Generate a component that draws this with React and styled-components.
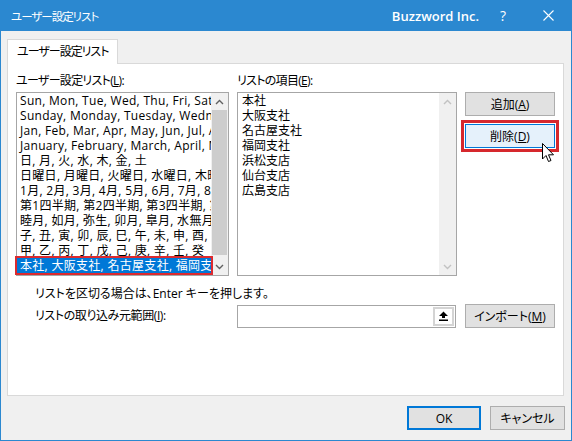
import React from "react";
import styled, { createGlobalStyle } from "styled-components";

const leftItems = [
  "Sun, Mon, Tue, Wed, Thu, Fri, Sat",
  "Sunday, Monday, Tuesday, Wednesday, Thursday, Friday, Saturday",
  "Jan, Feb, Mar, Apr, May, Jun, Jul, Aug, Sep, Oct, Nov, Dec",
  "January, February, March, April, May, June, July, August",
  "日, 月, 火, 水, 木, 金, 土",
  "日曜日, 月曜日, 火曜日, 水曜日, 木曜日, 金曜日, 土曜日",
  "1月, 2月, 3月, 4月, 5月, 6月, 7月, 8月, 9月, 10月",
  "第1四半期, 第2四半期, 第3四半期, 第4四半期",
  "睦月, 如月, 弥生, 卯月, 皐月, 水無月, 文月, 葉月",
  "子, 丑, 寅, 卯, 辰, 巳, 午, 未, 申, 酉, 戌, 亥",
  "甲, 乙, 丙, 丁, 戊, 己, 庚, 辛, 壬, 癸",
  "本社, 大阪支社, 名古屋支社, 福岡支社, 浜松支店, 仙台支店, 広島支店",
];

const rightItems = ["本社", "大阪支社", "名古屋支社", "福岡支社", "浜松支店", "仙台支店", "広島支店"];

const GlobalStyle = createGlobalStyle`
  html, body { margin: 0; padding: 0; background: #fff; }
  body { font-family: "Open Sans", "Noto Sans CJK JP", sans-serif; font-size: 12px; color: #000; }
`;

const Window = styled.div`
  box-sizing: border-box;
  position: relative;
  width: 572px;
  height: 441px;
  display: flex;
  flex-direction: column;
  background: #f0f0f0;
  border: 1px solid #2b88d0;
  border-top: none;
  font-family: "Open Sans", "Noto Sans CJK JP", sans-serif;
  font-size: 12px;
  font-feature-settings: "palt";
`;

const TitleBar = styled.div`
  height: 31px;
  flex: none;
  display: flex;
  align-items: center;
  background: #2b88d0;
  color: #fff;
  padding-left: 10px;
`;

const Title = styled.div`
  flex: 1;
  white-space: nowrap;
  font-size: 11.5px;
  letter-spacing: -1px;
`;

const Brand = styled.div`
  font-size: 13px;
  font-weight: 600;
  margin-right: 1px;
`;

const Caption = styled.div`
  width: ${(p) => p.$w}px;
  height: 31px;
  display: flex;
  align-items: center;
  justify-content: center;
  font-size: 14px;
`;

const Body = styled.div`
  flex: 1;
  display: flex;
  flex-direction: column;
  padding: 8px 7px 0 6px;
  min-height: 0;
`;

const Tab = styled.div`
  box-sizing: border-box;
  position: relative;
  z-index: 1;
  align-self: flex-start;
  height: 25px;
  margin-bottom: -1px;
  padding: 0 8px 0 9px;
  line-height: 23px;
  white-space: nowrap;
  letter-spacing: -1px;
  background: #fff;
  border: 1px solid #d9d9d9;
  border-bottom: none;
`;

const Panel = styled.div`
  flex: 1;
  display: flex;
  flex-direction: column;
  background: #fff;
  border: 1px solid #d9d9d9;
  padding: 9px 8px 0;
`;

const Grid = styled.div`
  display: grid;
  grid-template-columns: 213px 220px 90px;
  column-gap: 8px;
  margin-top: ${(p) => p.$top || 0}px;
  align-items: ${(p) => p.$align || "stretch"};
`;

const Label = styled.div`
  line-height: 16px;
  height: 19px;
  white-space: nowrap;
  letter-spacing: -0.7px;
`;

const ListBox = styled.div`
  box-sizing: border-box;
  height: 184px;
  display: flex;
  border: 1px solid #a6a6a6;
  background: #fff;
`;

const Items = styled.div`
  flex: 1;
  min-width: 0;
  display: flex;
  flex-direction: column;
`;

const Item = styled.div`
  position: relative;
  height: 15px;
  line-height: 15px;
  padding-left: ${(p) => p.$pad}px;
  white-space: nowrap;
  overflow: hidden;
  letter-spacing: ${(p) => (p.$wide ? "0.3px" : "0")};
  background: ${(p) => (p.$selected ? "#0078d7" : "transparent")};
  color: ${(p) => (p.$selected ? "#fff" : "#000")};
  outline: ${(p) => (p.$selected ? "2px solid #dc2a2f" : "none")};
  z-index: ${(p) => (p.$selected ? 2 : "auto")};
`;

const ScrollTrack = styled.div`
  width: 17px;
  flex: none;
  display: flex;
  flex-direction: column;
  background: #f0f0f0;
`;

const ArrowBox = styled.div`
  height: 17px;
  flex: none;
  display: flex;
  align-items: center;
  justify-content: center;
`;

const Thumb = styled.div`
  flex: 1;
  margin: 0 1px 3px;
  background: #cdcdcd;
`;

const Spacer = styled.div`
  flex: 1;
`;

const ButtonCol = styled.div`
  display: flex;
  flex-direction: column;
  gap: 8px;
`;

const Button = styled.div`
  box-sizing: border-box;
  height: 24px;
  width: ${(p) => (p.$w ? `${p.$w}px` : "auto")};
  display: flex;
  align-items: center;
  justify-content: center;
  white-space: nowrap;
  background: ${(p) => (p.$hover ? "#e5f1fb" : "#e1e1e1")};
  border: ${(p) => (p.$default ? "2px solid #0078d7" : p.$hover ? "1px solid #0078d7" : "1px solid #adadad")};
  outline: ${(p) => (p.$marked ? "3px solid #d6282d" : "none")};
  outline-offset: 1px;
`;

const Hint = styled.div`
  margin-top: 10px;
  padding-left: 19px;
  line-height: 16px;
`;

const RangeLabel = styled.div`
  padding-left: 19px;
  line-height: 16px;
  white-space: nowrap;
  letter-spacing: -0.4px;
`;

const Input = styled.div`
  box-sizing: border-box;
  height: 23px;
  width: 219px;
  display: flex;
  justify-content: flex-end;
  align-items: center;
  padding-right: 1px;
  background: #fff;
  border: 1px solid #a6a6a6;
`;

const RefButton = styled.div`
  box-sizing: border-box;
  width: 21px;
  height: 19px;
  display: flex;
  align-items: center;
  justify-content: center;
  background: #fff;
  border: 2px solid #d4d4d4;
`;

const Footer = styled.div`
  height: 44px;
  flex: none;
  display: flex;
  justify-content: flex-end;
  gap: 9px;
  padding: 10px 6px 0 0;
  box-sizing: border-box;
`;

const Cursor = styled.svg`
  position: absolute;
  left: 541px;
  top: 143px;
`;

function Chevron({ up, color }) {
  return (
    <svg width="9" height="6" viewBox="0 0 9 6">
      <polyline
        points={up ? "1,5 4.5,1.5 8,5" : "1,1 4.5,4.5 8,1"}
        fill="none"
        stroke={color}
        strokeWidth="1.4"
      />
    </svg>
  );
}

function Scrollbar({ disabled }) {
  const c = disabled ? "#c2c2c2" : "#606060";
  return (
    <ScrollTrack>
      <ArrowBox>
        <Chevron up color={c} />
      </ArrowBox>
      {disabled ? <Spacer /> : <Thumb />}
      <ArrowBox>
        <Chevron color={c} />
      </ArrowBox>
    </ScrollTrack>
  );
}

export default function App() {
  return (
    <>
      <GlobalStyle />
      <Window>
        <TitleBar>
          <Title>ユーザー設定リスト</Title>
          <Brand>Buzzword Inc.</Brand>
          <Caption $w={46}>?</Caption>
          <Caption $w={45}>
            <svg width="11" height="11" viewBox="0 0 11 11">
              <path d="M0.5 0.5 L10.5 10.5 M10.5 0.5 L0.5 10.5" stroke="#fff" strokeWidth="1.1" />
            </svg>
          </Caption>
        </TitleBar>
        <Body>
          <Tab>ユーザー設定リスト</Tab>
          <Panel>
            <Grid>
              <Label>
                ユーザー設定リスト(<u>L</u>):
              </Label>
              <Label>
                リストの項目(<u>E</u>):
              </Label>
              <div />
              <ListBox>
                <Items>
                  {leftItems.map((t, i) => (
                    <Item key={i} $pad={3} $wide $selected={i === leftItems.length - 1}>
                      {t}
                    </Item>
                  ))}
                </Items>
                <Scrollbar />
              </ListBox>
              <ListBox>
                <Items>
                  {rightItems.map((t, i) => (
                    <Item key={i} $pad={4}>
                      {t}
                    </Item>
                  ))}
                </Items>
                <Scrollbar disabled />
              </ListBox>
              <ButtonCol>
                <Button>
                  追加(<u>A</u>)
                </Button>
                <Button $hover $marked>
                  削除(<u>D</u>)
                </Button>
              </ButtonCol>
            </Grid>
            <Hint>リストを区切る場合は、Enter キーを押します。</Hint>
            <Grid $top={2} $align="center">
              <RangeLabel>
                リストの取り込み元範囲(<u>I</u>):
              </RangeLabel>
              <Input>
                <RefButton>
                  <svg width="9" height="10" viewBox="0 0 9 10">
                    <polygon points="0,5 4.5,0.5 9,5 6,5 6,7 3,7 3,5" fill="#000" />
                    <rect x="0" y="8.5" width="9" height="1.5" fill="#000" />
                  </svg>
                </RefButton>
              </Input>
              <Button>
                インポート(<u>M</u>)
              </Button>
            </Grid>
          </Panel>
        </Body>
        <Footer>
          <Button $w={74} $default>
            OK
          </Button>
          <Button $w={75}>キャンセル</Button>
        </Footer>
        <Cursor width="13" height="20" viewBox="0 0 13 20">
          <path
            d="M0.5 0.5 L0.5 16 L4 12.5 L6.5 18.5 L9 17.5 L6.5 11.8 L11.5 11.8 Z"
            fill="#fff"
            stroke="#000"
            strokeWidth="1"
            strokeLinejoin="round"
          />
        </Cursor>
      </Window>
    </>
  );
}
